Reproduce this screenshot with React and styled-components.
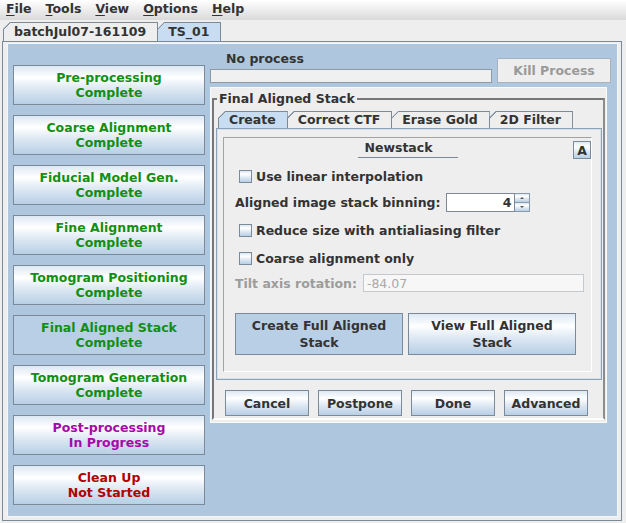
import styled, { createGlobalStyle, css } from "styled-components";

const GlobalStyle = createGlobalStyle`
  html, body {
    margin: 0;
    padding: 0;
    background: #eeeeee;
  }
  body {
    font-family: "DejaVu Sans", "Liberation Sans", sans-serif;
    font-size: 12.5px;
    font-weight: bold;
    color: #333333;
  }
  * {
    box-sizing: border-box;
  }
`;

const ocean = css`
  background: linear-gradient(
    to bottom,
    #dde8f3 0%,
    #ffffff 30%,
    #dde8f3 60%,
    #b8cfe5 100%
  );
`;

const Window = styled.div`
  width: 626px;
  height: 523px;
  overflow: hidden;
  display: flex;
  flex-direction: column;
  background: #eeeeee;
`;

const MenuBar = styled.div`
  height: 20px;
  display: flex;
  align-items: flex-start;
  gap: 14px;
  padding: 1px 0 0 6px;
  line-height: 15px;
  background: linear-gradient(#ffffff, #dadada);
`;

const MenuItem = styled.span`
  u {
    text-decoration-thickness: 1px;
    text-underline-offset: 2px;
  }
`;

const TabStrip = styled.div`
  height: 21px;
  display: flex;
  align-items: flex-end;
  padding-left: ${(p) => p.$inset || 0}px;
`;

/* Metal-style tab: the top-left corner is cut off and the cut is drawn as a
   1px diagonal line */
const Tab = styled.div`
  height: ${(p) => p.$h}px;
  line-height: ${(p) => p.$h - 2}px;
  padding: 0 11px 0 10px;
  border: 1px solid #7a8a99;
  border-bottom: none;
  background: linear-gradient(
    135deg,
    #7a8a99 0,
    #7a8a99 4.9px,
    ${(p) => (p.$selected ? "#c8ddf2" : "#eeeeee")} 4.9px
  );
  clip-path: polygon(7px 0, 100% 0, 100% 100%, 0 100%, 0 7px);
  white-space: nowrap;
  & + & {
    margin-left: -1px;
  }
`;

const Frame = styled.div`
  flex: 1;
  display: flex;
  margin: 0 4px 2px 2px;
  padding: 1px 3px 3px 4px;
  border: 1px solid #7a8a99;
  background: #eeeeee;
`;

const BluePanel = styled.div`
  flex: 1;
  display: flex;
  gap: 5px;
  padding: 0 5px;
  border: 1px solid #f4f7fa;
  background: #aec7de;
`;

const StepColumn = styled.div`
  width: 192px;
  display: flex;
  flex-direction: column;
  gap: 10px;
  padding-top: 21px;
`;

const StepButton = styled.button`
  height: 40px;
  width: 100%;
  padding: 0;
  border: 1px solid #7a8a99;
  font: inherit;
  line-height: 15px;
  text-align: center;
  color: ${(p) => p.$color};
  ${(p) => (p.$active ? "background: #b8cfe5;" : ocean)}
`;

const MainColumn = styled.div`
  width: 401px;
  display: flex;
  flex-direction: column;
  padding-top: 7px;
`;

const StatusRow = styled.div`
  display: flex;
  align-items: flex-end;
`;

const StatusBox = styled.div`
  width: 282px;
  display: flex;
  flex-direction: column;
`;

const StatusLabel = styled.div`
  padding-left: 16px;
  line-height: 15px;
`;

const ProgressBar = styled.div`
  margin-top: 3px;
  height: 14px;
  border: 1px solid #8e99a4;
  background: #f0f0f0;
`;

const KillButton = styled.button`
  width: 114px;
  height: 25px;
  margin-left: 5px;
  padding: 0;
  border: 1px solid #a9b3bd;
  background: #eeeeee;
  font: inherit;
  line-height: 15px;
  color: #9a9a9a;
`;

const GrayPanel = styled.div`
  width: 397px;
  margin-top: 4px;
  padding: 3px 1px 2px 1px;
  border: 1px solid #fafafa;
  background: #eeeeee;
`;

const Group = styled.fieldset`
  margin: 0;
  min-width: 0;
  padding: 5px 1px 2px 2px;
  border-style: solid;
  border-width: 2px;
  border-color: #777777 #8c8c8c #ffffff #777777;
`;

const GroupTitle = styled.legend`
  margin-left: 1px;
  padding: 0 2px;
  line-height: 15px;
`;

const InnerTabs = styled.div`
  display: flex;
  padding-left: 2px;
`;

const TabPane = styled.div`
  padding: 8px 9px 7px 6px;
  border: 1px solid #8da2b6;
  box-shadow: inset 0 0 0 1px #d4e2f0;
`;

const Section = styled.div`
  display: flex;
  flex-direction: column;
  padding: 3px 0 16px 11px;
  border: 1px solid;
  border-color: #a3a3a3 #ffffff #ffffff #a3a3a3;
`;

const SectionHeader = styled.div`
  margin-left: -11px;
  display: grid;
  grid-template-columns: 1fr auto 1fr;
  height: 18px;
`;

const SectionTitle = styled.div`
  grid-column: 2;
  width: 100px;
  height: 17px;
  padding: 0 18px 2px 0;
  line-height: 14px;
  text-align: center;
  border-bottom: 1px solid #7a8a99;
`;

const SmallButton = styled.button`
  grid-column: 3;
  justify-self: end;
  width: 18px;
  height: 18px;
  padding: 0;
  border: 1px solid #7a8a99;
  font: inherit;
  line-height: 15px;
  color: #333333;
  ${ocean}
`;

const Row = styled.div`
  display: flex;
  align-items: center;
  height: ${(p) => p.$h || 20}px;
  margin-top: ${(p) => p.$top}px;
  gap: ${(p) => p.$gap || 0}px;
  color: ${(p) => (p.$disabled ? "#9c9c9c" : "#333333")};
`;

const CheckBox = styled.span`
  width: 13px;
  height: 13px;
  margin: 0 4px 0 4px;
  border: 1px solid #7a8a99;
  ${ocean}
`;

const Field = styled.div`
  height: ${(p) => p.$h}px;
  width: ${(p) => p.$w}px;
  margin-left: 6px;
  padding: 0 3px;
  display: flex;
  align-items: center;
  justify-content: ${(p) => (p.$right ? "flex-end" : "flex-start")};
  border: 1px solid ${(p) => (p.$disabled ? "#c4c9ce" : "#7a8a99")};
  background: ${(p) => (p.$disabled ? "#f7f7f7" : "#ffffff")};
  color: ${(p) => (p.$disabled ? "#a9a9a9" : "#333333")};
  font-weight: ${(p) => (p.$disabled ? "normal" : "bold")};
`;

const Spinner = styled.div`
  display: flex;
  flex-direction: column;
  width: 15px;
  height: 19px;
`;

const SpinArrow = styled.span`
  flex: 1;
  display: flex;
  align-items: center;
  justify-content: center;
  border: 1px solid #8a9aa9;
  border-left: none;
  ${ocean}
  & + & {
    border-top: none;
  }
  &::after {
    content: "";
    border-left: 2px solid transparent;
    border-right: 2px solid transparent;
    ${(p) =>
      p.$up
        ? "border-bottom: 2px solid #555555;"
        : "border-top: 2px solid #555555;"}
  }
`;

const ActionButton = styled.button`
  width: ${(p) => p.$w}px;
  height: ${(p) => p.$h}px;
  padding: 0;
  border: 1px solid #7a8a99;
  font: inherit;
  line-height: ${(p) => p.$lh || 15}px;
  color: #333333;
  ${(p) => (p.$pressed ? "background: #b8cfe5;" : ocean)}
`;

const ButtonBar = styled.div`
  display: flex;
  gap: 9px;
  margin-top: 10px;
  padding-left: 9px;
`;

const steps = [
  ["Pre-processing", "Complete", "done"],
  ["Coarse Alignment", "Complete", "done"],
  ["Fiducial Model Gen.", "Complete", "done"],
  ["Fine Alignment", "Complete", "done"],
  ["Tomogram Positioning", "Complete", "done"],
  ["Final Aligned Stack", "Complete", "done", true],
  ["Tomogram Generation", "Complete", "done"],
  ["Post-processing", "In Progress", "running"],
  ["Clean Up", "Not Started", "idle"],
];

const stateColors = {
  done: "#128f12",
  running: "#a808a8",
  idle: "#b00000",
};

const menus = ["File", "Tools", "View", "Options", "Help"];

function Check({ label }) {
  return (
    <>
      <CheckBox />
      {label}
    </>
  );
}

export default function App() {
  return (
    <Window>
      <GlobalStyle />
      <MenuBar>
        {menus.map((m) => (
          <MenuItem key={m}>
            <u>{m[0]}</u>
            {m.slice(1)}
          </MenuItem>
        ))}
      </MenuBar>

      <TabStrip $inset={3}>
        <Tab $h={19}>batchJul07-161109</Tab>
        <Tab $h={19} $selected>
          TS_01
        </Tab>
      </TabStrip>

      <Frame>
        <BluePanel>
          <StepColumn>
            {steps.map(([top, bottom, state, active]) => (
              <StepButton
                key={top}
                $color={stateColors[state]}
                $active={active}
              >
                {top}
                <br />
                {bottom}
              </StepButton>
            ))}
          </StepColumn>

          <MainColumn>
            <StatusRow>
              <StatusBox>
                <StatusLabel>No process</StatusLabel>
                <ProgressBar />
              </StatusBox>
              <KillButton disabled>Kill Process</KillButton>
            </StatusRow>

            <GrayPanel>
              <Group>
                <GroupTitle>Final Aligned Stack</GroupTitle>
                <InnerTabs>
                  <Tab $h={17} $selected>
                    Create
                  </Tab>
                  <Tab $h={17}>Correct CTF</Tab>
                  <Tab $h={17}>Erase Gold</Tab>
                  <Tab $h={17}>2D Filter</Tab>
                </InnerTabs>

                <TabPane>
                  <Section>
                    <SectionHeader>
                      <SectionTitle>Newstack</SectionTitle>
                      <SmallButton>A</SmallButton>
                    </SectionHeader>

                    <Row $top={7}>
                      <Check label="Use linear interpolation" />
                    </Row>

                    <Row $top={6}>
                      Aligned image stack binning:
                      <Field $w={69} $h={19} $right>
                        4
                      </Field>
                      <Spinner>
                        <SpinArrow $up />
                        <SpinArrow />
                      </Spinner>
                    </Row>

                    <Row $top={8}>
                      <Check label="Reduce size with antialiasing filter" />
                    </Row>

                    <Row $top={8}>
                      <Check label="Coarse alignment only" />
                    </Row>

                    <Row $top={5} $disabled>
                      Tilt axis rotation:
                      <Field $w={221} $h={18} $disabled>
                        -84.07
                      </Field>
                    </Row>

                    <Row $top={20} $h={42} $gap={5}>
                      <ActionButton $w={168} $h={42} $lh={17} $pressed>
                        Create Full Aligned
                        <br />
                        Stack
                      </ActionButton>
                      <ActionButton $w={168} $h={42} $lh={17}>
                        View Full Aligned
                        <br />
                        Stack
                      </ActionButton>
                    </Row>
                  </Section>
                </TabPane>

                <ButtonBar>
                  <ActionButton $w={84} $h={26}>
                    Cancel
                  </ActionButton>
                  <ActionButton $w={84} $h={26}>
                    Postpone
                  </ActionButton>
                  <ActionButton $w={84} $h={26}>
                    Done
                  </ActionButton>
                  <ActionButton $w={84} $h={26}>
                    Advanced
                  </ActionButton>
                </ButtonBar>
              </Group>
            </GrayPanel>
          </MainColumn>
        </BluePanel>
      </Frame>
    </Window>
  );
}
